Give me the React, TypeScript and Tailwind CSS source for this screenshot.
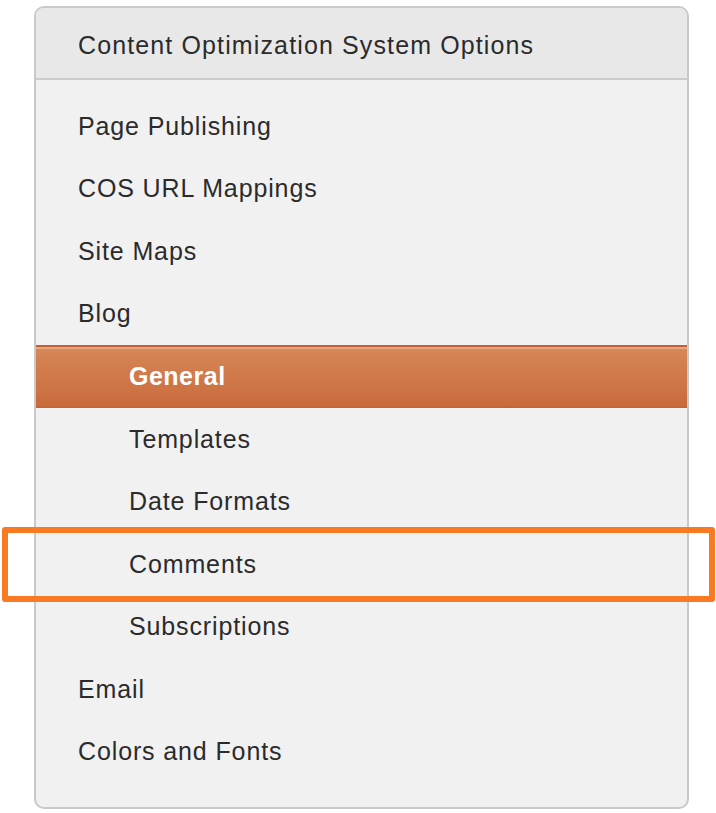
const items = [
  { label: "Page Publishing", level: 0 },
  { label: "COS URL Mappings", level: 0 },
  { label: "Site Maps", level: 0 },
  { label: "Blog", level: 0 },
  { label: "General", level: 1, active: true },
  { label: "Templates", level: 1 },
  { label: "Date Formats", level: 1 },
  { label: "Comments", level: 1 },
  { label: "Subscriptions", level: 1 },
  { label: "Email", level: 0 },
  { label: "Colors and Fonts", level: 0 },
];

export default function App() {
  return (
    <div
      className="relative min-h-[813px] w-[716px] bg-white pt-[6px] pl-[34px]"
      style={{ fontFamily: '"Liberation Sans", Arial, sans-serif' }}
    >
      <div className="w-[655px] overflow-hidden rounded-[10px] border-2 border-[#c9c9c9] bg-[#f1f1f1]">
        <div className="flex h-[72px] items-center border-b-2 border-[#cbcbcb] bg-[#e8e8e8] pt-[5px] pl-[42px] text-[25px] tracking-[0.045em] text-[#2b2b2b]">
          Content Optimization System Options
        </div>

        <div className="pt-[15px] pb-[24px]">
          {items.map((item) =>
            item.active ? (
              <div
                key={item.label}
                className="flex h-[63px] items-center border-t-2 border-b-2 border-t-[#c4602f] border-b-[#c56536] bg-gradient-to-b from-[#d78758] to-[#c96b3c] pl-[93px] text-[25px] font-bold tracking-[0.02em] text-white shadow-[inset_0_2px_0_#e4a784]"
              >
                {item.label}
              </div>
            ) : (
              <div
                key={item.label}
                className={`flex h-[62.5px] items-center text-[25px] tracking-[0.035em] text-[#2b2b2b] ${
                  item.level === 1 ? "pl-[93px]" : "pl-[42px]"
                }`}
              >
                {item.label}
              </div>
            )
          )}
        </div>
      </div>

      {/* annotation box around Comments */}
      <div className="absolute left-[2px] top-[527px] h-[75px] w-[713px] rounded-[3px] border-[6px] border-[#f97a22]" />
    </div>
  );
}
